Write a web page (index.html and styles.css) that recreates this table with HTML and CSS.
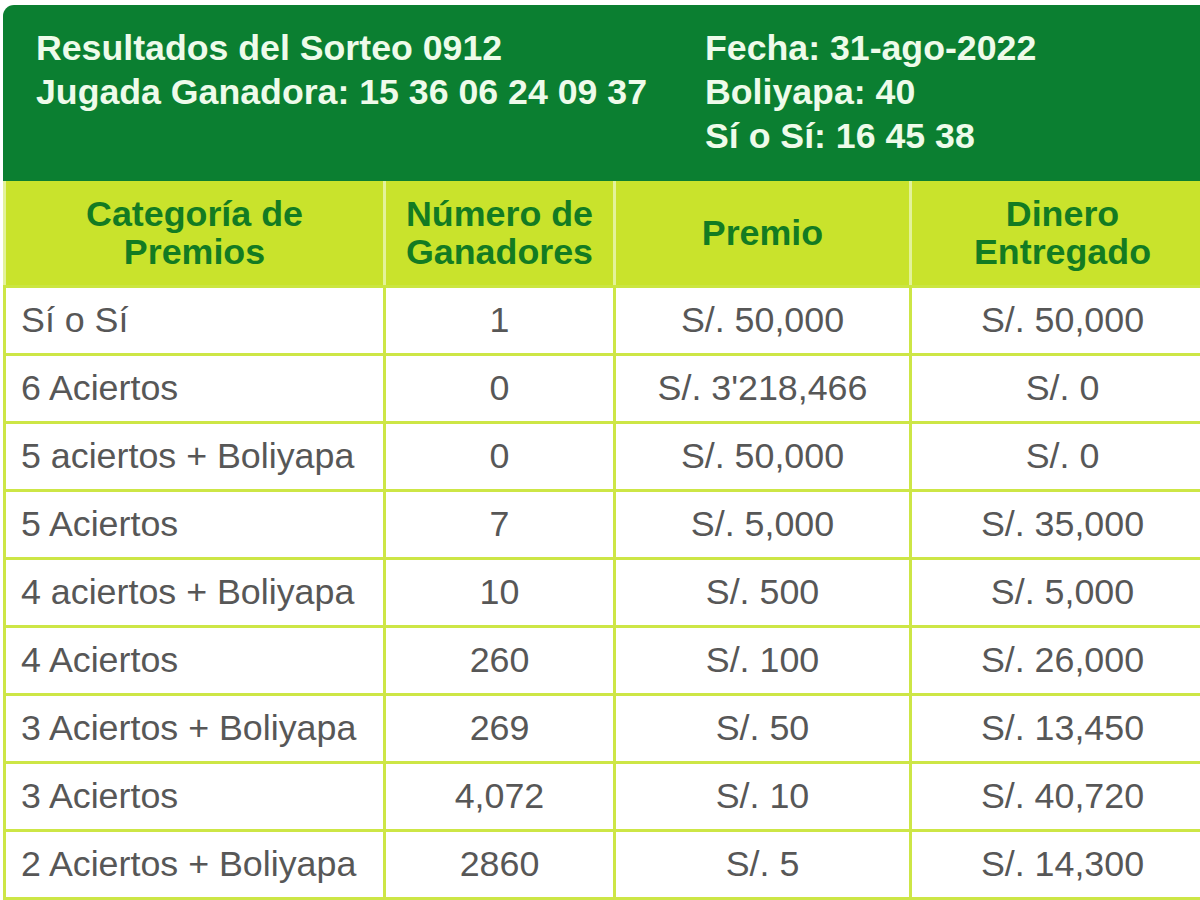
FILE: index.html
```html
<!DOCTYPE html>
<html lang="es">
<head>
<meta charset="utf-8">
<title>Resultados del Sorteo 0912</title>
<link rel="stylesheet" href="styles.css">
</head>
<body>
<div class="page">
  <div class="card">
    <div class="banner">
      <div class="banner-col left">
        <div>Resultados del Sorteo 0912</div>
        <div>Jugada Ganadora: 15 36 06 24 09 37</div>
      </div>
      <div class="banner-col right">
        <div>Fecha: 31-ago-2022</div>
        <div>Boliyapa: 40</div>
        <div>Sí o Sí: 16 45 38</div>
      </div>
    </div>
    <table class="results">
      <colgroup>
        <col class="c1"><col class="c2"><col class="c3"><col class="c4">
      </colgroup>
      <thead>
        <tr>
          <th>Categoría de<br>Premios</th>
          <th>Número de<br>Ganadores</th>
          <th>Premio</th>
          <th>Dinero<br>Entregado</th>
        </tr>
      </thead>
      <tbody>
        <tr><td class="cat">Sí o Sí</td><td>1</td><td>S/. 50,000</td><td>S/. 50,000</td></tr>
        <tr><td class="cat">6 Aciertos</td><td>0</td><td>S/. 3'218,466</td><td>S/. 0</td></tr>
        <tr><td class="cat">5 aciertos + Boliyapa</td><td>0</td><td>S/. 50,000</td><td>S/. 0</td></tr>
        <tr><td class="cat">5 Aciertos</td><td>7</td><td>S/. 5,000</td><td>S/. 35,000</td></tr>
        <tr><td class="cat">4 aciertos + Boliyapa</td><td>10</td><td>S/. 500</td><td>S/. 5,000</td></tr>
        <tr><td class="cat">4 Aciertos</td><td>260</td><td>S/. 100</td><td>S/. 26,000</td></tr>
        <tr><td class="cat">3 Aciertos + Boliyapa</td><td>269</td><td>S/. 50</td><td>S/. 13,450</td></tr>
        <tr><td class="cat">3 Aciertos</td><td>4,072</td><td>S/. 10</td><td>S/. 40,720</td></tr>
        <tr><td class="cat">2 Aciertos + Boliyapa</td><td>2860</td><td>S/. 5</td><td>S/. 14,300</td></tr>
      </tbody>
    </table>
  </div>
</div>
</body>
</html>
```

FILE: styles.css
```css
html, body {
  margin: 0;
  padding: 0;
  overflow: hidden;
  background: #ffffff;
}

.page {
  padding: 5px 0 0 3px;
  width: 1220px;
  font-family: "Liberation Sans", Arial, sans-serif;
}

.card {
  width: 1210px;
  border-radius: 11px 11px 0 0;
  overflow: hidden;
}

.banner {
  background: #0b7f31;
  color: #eefbea;
  font-weight: bold;
  font-size: 35.7px;
  line-height: 44px;
  padding: 21px 0 20px 33px;
  display: flex;
  height: 135px;
}

.banner-col.left {
  width: 669px;
}

.results {
  border-collapse: collapse;
  table-layout: fixed;
  width: 1210px;
  font-size: 35.8px;
}

.results col.c1 { width: 380px; }
.results col.c2 { width: 230px; }
.results col.c3 { width: 296px; }
.results col.c4 { width: 304px; }

.results th {
  background: #c9e32c;
  color: #137b22;
  font-weight: bold;
  line-height: 38px;
  height: 104px;
  padding: 0;
  border-left: 3px solid #e3f29a;
  border-right: 3px solid #e3f29a;
  border-bottom: 3px solid #cbe640;
  text-align: center;
  vertical-align: middle;
}

.results td {
  color: #575757;
  height: 65px;
  padding: 0;
  border: 3px solid #cde646;
  text-align: center;
  vertical-align: middle;
  white-space: nowrap;
}

.results td.cat {
  text-align: left;
  padding-left: 15px;
}
```
